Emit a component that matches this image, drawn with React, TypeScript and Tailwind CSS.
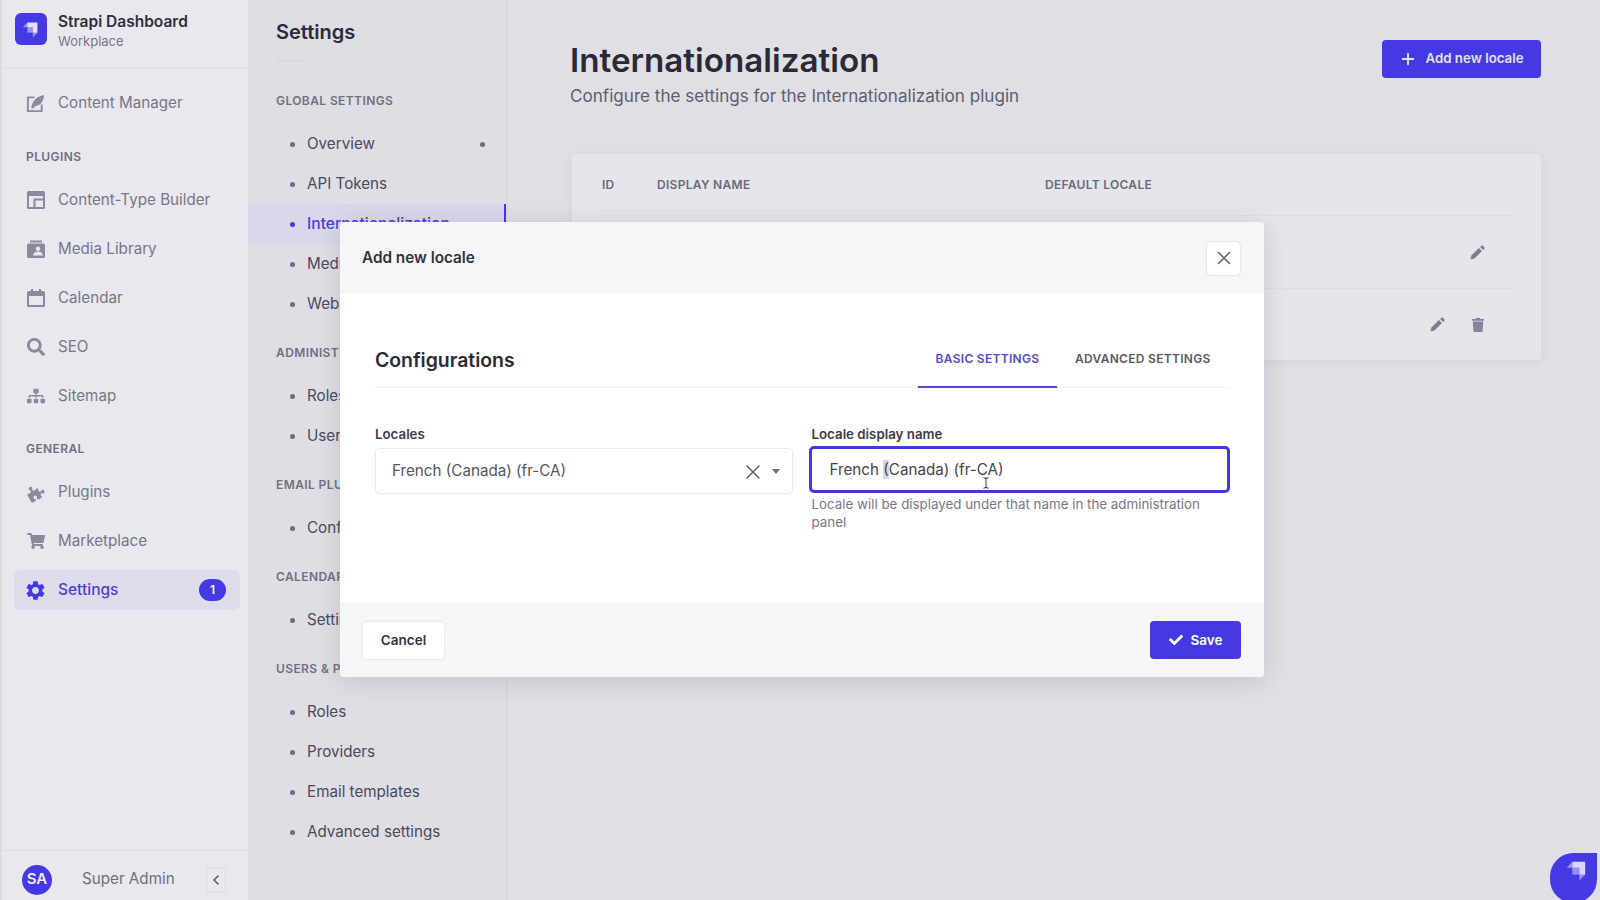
import { ChevronLeft, Plus, X } from 'lucide-react'
import { FaCheck, FaPuzzlePiece, FaSearch, FaShoppingCart, FaSitemap, FaTrash } from 'react-icons/fa'
import { MdSettings } from 'react-icons/md'
import type { ReactNode } from 'react'

function StrapiMark({ className }: { className?: string }) {
  return (
    <svg viewBox="0 0 24 24" className={className} fill="currentColor">
      <path d="M8 5h11v11h-5V10H8z" />
      <path d="M8 10h6v6H8z" opacity="0.55" />
      <path d="M8 5v5H3z" opacity="0.55" />
      <path d="M14 16h5l-5 5z" opacity="0.55" />
    </svg>
  )
}

function WriteIcon() {
  return (
    <svg viewBox="0 0 20 20" className="w-[19px] h-[19px]" fill="none">
      <path d="M9 3.5H2v14.5h14.5v-7" stroke="currentColor" strokeWidth="2" />
      <path d="M5.5 14.5C6.5 8 10.5 2.5 19 1c-.3 6.5-3.5 11-9 11.5l-3 3z" fill="currentColor" />
    </svg>
  )
}

function LayoutIcon() {
  return (
    <svg viewBox="0 0 18 18" className="w-[18px] h-[18px]" fill="currentColor">
      <path fillRule="evenodd" d="M1.5 0h15A1.5 1.5 0 0 1 18 1.5v15a1.5 1.5 0 0 1-1.5 1.5h-15A1.5 1.5 0 0 1 0 16.5v-15A1.5 1.5 0 0 1 1.5 0zM2 5v11h4.5V7.5h9.500V5zM8.500 9.500V16H16V9.500z" />
    </svg>
  )
}

function PictureIcon() {
  return (
    <svg viewBox="0 0 18 18" className="w-[18px] h-[18px]" fill="currentColor">
      <path d="M3 0.500h12v2H3z" />
      <path fillRule="evenodd" d="M1.500 3.500h15A1.500 1.500 0 0 1 18 5v11.500a1.500 1.500 0 0 1-1.500 1.500h-15A1.500 1.500 0 0 1 0 16.500V5a1.500 1.500 0 0 1 1.500-1.500zM11 6.500a2.200 2.200 0 1 0 0 4.400 2.200 2.200 0 0 0 0-4.400zM6 15.500c.5-2.600 2.500-4 5-4s4.500 1.400 5 4z" />
    </svg>
  )
}

function CalendarIcon() {
  return (
    <svg viewBox="0 0 18 18" className="w-[18px] h-[18px]" fill="currentColor">
      <path d="M4 0h2v3H4zM12 0h2v3h-2z" />
      <path fillRule="evenodd" d="M1.500 2h15A1.500 1.500 0 0 1 18 3.500v13a1.500 1.500 0 0 1-1.500 1.500h-15A1.500 1.500 0 0 1 0 16.500v-13A1.500 1.500 0 0 1 1.500 2zM2 7v9h14V7z" />
    </svg>
  )
}

// thin slanted pencil used in the table rows
function PencilIcon() {
  return (
    <svg viewBox="0 0 16 16" className="w-[15px] h-[15px]" fill="currentColor">
      <path d="M0.500 15.500l1-4.200 8-8 3.200 3.200-8 8z" />
      <path d="M10.800 2l1.300-1.300a1 1 0 0 1 1.400 0l1.800 1.800a1 1 0 0 1 0 1.400L14 5.200z" />
    </svg>
  )
}

const groups: { label?: string; items: { name: string; icon: ReactNode }[] }[] = [
  { items: [{ name: 'Content Manager', icon: <WriteIcon /> }] },
  {
    label: 'PLUGINS',
    items: [
      { name: 'Content-Type Builder', icon: <LayoutIcon /> },
      { name: 'Media Library', icon: <PictureIcon /> },
      { name: 'Calendar', icon: <CalendarIcon /> },
      { name: 'SEO', icon: <FaSearch className="w-[18px] h-[18px]" /> },
      { name: 'Sitemap', icon: <FaSitemap className="w-[18px] h-[18px]" /> },
    ],
  },
  {
    label: 'GENERAL',
    items: [
      { name: 'Plugins', icon: <FaPuzzlePiece className="w-[17px] h-[17px] -rotate-[30deg]" /> },
      { name: 'Marketplace', icon: <FaShoppingCart className="w-[18px] h-[18px]" /> },
    ],
  },
]

const settingsNav = [
  { label: 'GLOBAL SETTINGS', items: ['Overview', 'API Tokens', 'Internationalization', 'Media Library', 'Webhooks'] },
  { label: 'ADMINISTRATION PANEL', items: ['Roles', 'Users'] },
  { label: 'EMAIL PLUGIN', items: ['Configuration'] },
  { label: 'CALENDAR', items: ['Settings'] },
  { label: 'USERS & PERMISSIONS PLUGIN', items: ['Roles', 'Providers', 'Email templates', 'Advanced settings'] },
]

function Sidebar() {
  return (
    <aside className="w-[248px] shrink-0 flex flex-col bg-[#e9e8ee] border-l-2 border-[#dcdbe1]">
      <div className="h-[69px] shrink-0 flex items-start gap-[11px] pl-[13px] pt-[13px] border-b border-[#dfdee4]">
        <div className="w-8 h-8 rounded-md bg-[#4539e4] text-[#e4e1fb] flex items-center justify-center">
          <StrapiMark className="w-[22px] h-[22px]" />
        </div>
        <div className="flex flex-col">
          <span className="text-[15.500px] leading-[18px] font-semibold text-[#2f2e40]">Strapi Dashboard</span>
          <span className="text-[13px] leading-[18px] mt-[1px] text-[#77768a]">Workplace</span>
        </div>
      </div>
      <nav className="flex-1 flex flex-col pt-[14px] pl-3 pr-2">
        {groups.map((group, i) => (
          <div key={i} className="flex flex-col">
            {group.label && (
              <div className={`h-4 flex items-center pl-3 text-[12px] font-semibold tracking-[0.4px] text-[#6f6e82] ${i === 1 ? 'mt-[26px] mb-[15px]' : 'mt-[25px] mb-[15px]'}`}>
                {group.label}
              </div>
            )}
            <div className="flex flex-col gap-[9px]">
              {group.items.map((item) => (
                <div key={item.name} className="h-10 flex items-center gap-[13px] pl-3 text-[15.200px] text-[#77768a]">
                  <span className="w-[19px] flex justify-center text-[#8b8a9c]">{item.icon}</span>
                  {item.name}
                </div>
              ))}
              <SettingsItem show={i === 2} />
            </div>
          </div>
        ))}
      </nav>
      <div className="h-[50px] shrink-0 flex items-center pl-[20px] pt-2 border-t border-[#dddce2]">
        <div className="w-[30px] h-[30px] rounded-full bg-[#4539e4] text-[#eeecfd] text-[15px] font-semibold flex items-center justify-center">SA</div>
        <span className="ml-[30px] text-[15.200px] text-[#6f6e7f]">Super Admin</span>
        <div className="ml-[31px] w-5 h-[26px] rounded-sm border border-[#dddce2] flex items-center justify-center text-[#5c5b6c]">
          <ChevronLeft className="w-4 h-4" strokeWidth={2.500} />
        </div>
      </div>
    </aside>
  )
}

function SettingsItem({ show }: { show: boolean }) {
  if (!show) return null
  return (
    <div className="h-10 flex items-center gap-[13px] pl-3 pr-[14px] rounded-md bg-[#dddcea] text-[15.500px] font-medium text-[#4a3fd8]">
      <span className="w-[19px] flex justify-center text-[#4539e4]">
        <MdSettings className="w-[23px] h-[23px] shrink-0" />
      </span>
      Settings
      <span className="ml-auto w-[27px] h-[22px] rounded-full bg-[#4539e4] text-white text-[12px] font-semibold flex items-center justify-center">1</span>
    </div>
  )
}

function SettingsNav() {
  return (
    <div className="w-[260px] shrink-0 bg-[#dfdee5] border-r-2 border-[#d9d8df] flex flex-col">
      <div className="pl-7 pt-[19px]">
        <h2 className="text-[20px] leading-[27px] font-semibold text-[#2b2a3b]">Settings</h2>
        <div className="w-7 h-[2px] mt-[14px] bg-[#d9d8df]" />
      </div>
      <div className="flex flex-col gap-[21px] mt-[31px]">
        {settingsNav.map((section) => (
          <div key={section.label} className="flex flex-col">
            <div className="h-4 pl-7 mb-[15px] flex items-center text-[12px] whitespace-nowrap font-semibold tracking-[0.4px] text-[#70707f]">
              {section.label}
            </div>
            {section.items.map((name) => {
              const active = name === 'Internationalization'
              return (
                <div
                  key={name}
                  className={`h-10 flex items-center pl-[42px] pr-[21px] relative ${active ? 'bg-[#d9d8ea] text-[#4a3fd8] text-[15.600px] font-medium' : 'text-[#4b4a5a] text-[15.200px]'}`}
                >
                  <span className={`w-[5px] h-[5px] rounded-full mr-[12px] ${active ? 'bg-[#4539e4]' : 'bg-[#6d6c7c]'}`} />
                  {name}
                  {name === 'Overview' && <span className="ml-auto w-[5px] h-[5px] rounded-full bg-[#6d6c7c]" />}
                  {active && <span className="absolute right-0 top-0 bottom-0 w-[2px] bg-[#4539e4]" />}
                </div>
              )
            })}
          </div>
        ))}
      </div>
    </div>
  )
}

function MainArea() {
  return (
    <main className="flex-1 bg-[#dfdfe5] pl-[62px] pr-[59px] pt-10">
      <div className="flex justify-between items-start">
        <div className="flex flex-col">
          <h1 className="text-[33.200px] leading-10 font-semibold text-[#2a2938]">Internationalization</h1>
          <p className="text-[17.100px] leading-6 mt-[4px] text-[#5e5d6e]">Configure the settings for the Internationalization plugin</p>
        </div>
        <button className="w-[159px] h-[38px] rounded bg-[#4539e4] text-[#e4e1fb] text-[13.300px] font-semibold flex items-center justify-center gap-2">
          <Plus className="w-[18px] h-[18px]" strokeWidth={2.500} />
          Add new locale
        </button>
      </div>
      <div className="mt-[46px] ml-[2px] h-[206px] rounded bg-[#e6e5eb] shadow-[0_2px_8px_rgba(60,60,80,0.08)] pl-[30px] pr-7 flex flex-col">
        <div className="h-[62px] flex items-center border-b border-[#dfdee4] text-[12px] font-semibold tracking-[0.3px] text-[#6a697a]">
          <span className="w-[55px]">ID</span>
          <span className="w-[388px]">DISPLAY NAME</span>
          <span>DEFAULT LOCALE</span>
        </div>
        <div className="h-[73px] pt-px flex items-center justify-end gap-[25px] pr-[28px] border-b border-[#dfdee4] text-[#7d7c8c]">
          <PencilIcon />
        </div>
        <div className="h-[71px] flex items-center justify-end gap-[26px] pr-[28px] text-[#7d7c8c]">
          <PencilIcon />
          <FaTrash className="w-[14px] h-[14px] text-[#85849a]" />
        </div>
      </div>
    </main>
  )
}

function Modal() {
  return (
    <div className="absolute left-[340px] top-[222px] w-[924px] h-[455px] rounded bg-white shadow-[0_4px_24px_rgba(50,50,70,0.16)] flex flex-col overflow-hidden">
      <div className="h-[72px] shrink-0 bg-[#f6f6f9] flex items-center justify-between pl-[22px] pr-6">
        <span className="text-[15.300px] font-semibold text-[#32313f]">Add new locale</span>
        <div className="w-[33px] h-[33px] rounded-sm bg-white shadow-[0_0_2px_rgba(50,50,70,0.25)] flex items-center justify-center text-[#666575]">
          <X className="w-[22px] h-[22px]" strokeWidth={1.750} />
        </div>
      </div>
      <div className="flex-1 pl-[35px] pr-[36px] flex flex-col">
        <div className="h-[94px] flex items-end justify-between border-b border-[#f0f0f4]">
          <h3 className="text-[19.400px] leading-[24px] font-semibold text-[#2b2a3b] pb-[15px]">Configurations</h3>
          <div className="flex items-end gap-0 mb-[-1px]">
            <div className="w-[139px] h-[58px] pt-[20px] flex justify-center text-[12px] font-semibold text-[#5248db] border-b-2 border-[#5248db] tracking-[0.3px]">BASIC SETTINGS</div>
            <div className="w-[171px] h-[58px] pt-[20px] flex justify-start pl-[18px] text-[12px] font-semibold text-[#5a5968] tracking-[0.3px]">ADVANCED SETTINGS</div>
          </div>
        </div>
        <div className="grid grid-cols-2 gap-[18px] mt-[36px]">
          <div className="flex flex-col">
            <label className="text-[13.300px] leading-[20px] font-semibold text-[#3d3c4a]">Locales</label>
            <div className="mt-[4px] h-[46px] rounded border border-[#e9e9ef] flex items-center pl-4 pr-3 pt-px text-[15.200px] text-[#55545f]">
              <span>French (Canada) (fr-CA)</span>
              <X className="ml-auto w-6 h-6 text-[#5d5c6b]" strokeWidth={1.500} />
              <svg viewBox="0 0 8 5" className="ml-[7px] w-2 h-[5px] text-[#6d6c7c]" fill="currentColor">
                <path d="M0 0h8L4 5z" />
              </svg>
            </div>
          </div>
          <div className="flex flex-col">
            <label className="text-[13.300px] leading-[20px] font-semibold text-[#3d3c4a] pl-px">Locale display name</label>
            <div className="relative mt-[2px] -mx-[2px] h-[47px] rounded-[5px] border-[3px] border-[#4338dc] flex items-center pl-[18px] pt-px text-[15.200px] text-[#45444f]">
              <span>
                French <span className="bg-[#d5daf0]">(</span>Canada) (fr-CA)
              </span>
              <svg viewBox="0 0 8 14" className="absolute left-[170px] top-[28px] w-2 h-3 text-[#3c3c46]" fill="none" stroke="currentColor" strokeWidth="1.200">
                <path d="M1 1c1.500 0 3 0 3 1.500v9C4 13 2.500 13 1 13M7 1C5.500 1 4 1 4 2.500v9C4 13 5.500 13 7 13" />
              </svg>
            </div>
            <p className="mt-[2px] pl-px text-[13.350px] leading-[18px] text-[#777685]">
              Locale will be displayed under that name in the administration panel
            </p>
          </div>
        </div>
      </div>
      <div className="h-[75px] shrink-0 bg-[#f6f6f9] flex items-center justify-between pl-[23px] pr-[23px] pt-px">
        <button className="w-[81px] h-[37px] rounded-sm bg-white shadow-[0_0_2px_rgba(50,50,70,0.2)] text-[13.500px] font-semibold text-[#32313f]">Cancel</button>
        <button className="w-[91px] h-[38px] rounded bg-[#4539e4] text-white text-[13.500px] font-semibold flex items-center justify-center gap-2">
          <FaCheck className="w-[14px] h-[14px]" />
          Save
        </button>
      </div>
    </div>
  )
}

export default function App() {
  return (
    <div className="relative w-[1600px] h-[900px] overflow-hidden flex font-['Inter',sans-serif]">
      <Sidebar />
      <SettingsNav />
      <MainArea />
      <Modal />
      {/* help bubble, clipped by the window corner */}
      <div className="absolute left-[1550px] top-[853px] w-[47px] h-[50px] rounded-l-full rounded-br-full rounded-tr-lg bg-[#4539e4] text-[#d9d6fb] flex items-start justify-center pt-[3px] pl-[7px]">
        <StrapiMark className="w-7 h-7" />
      </div>
    </div>
  )
}
